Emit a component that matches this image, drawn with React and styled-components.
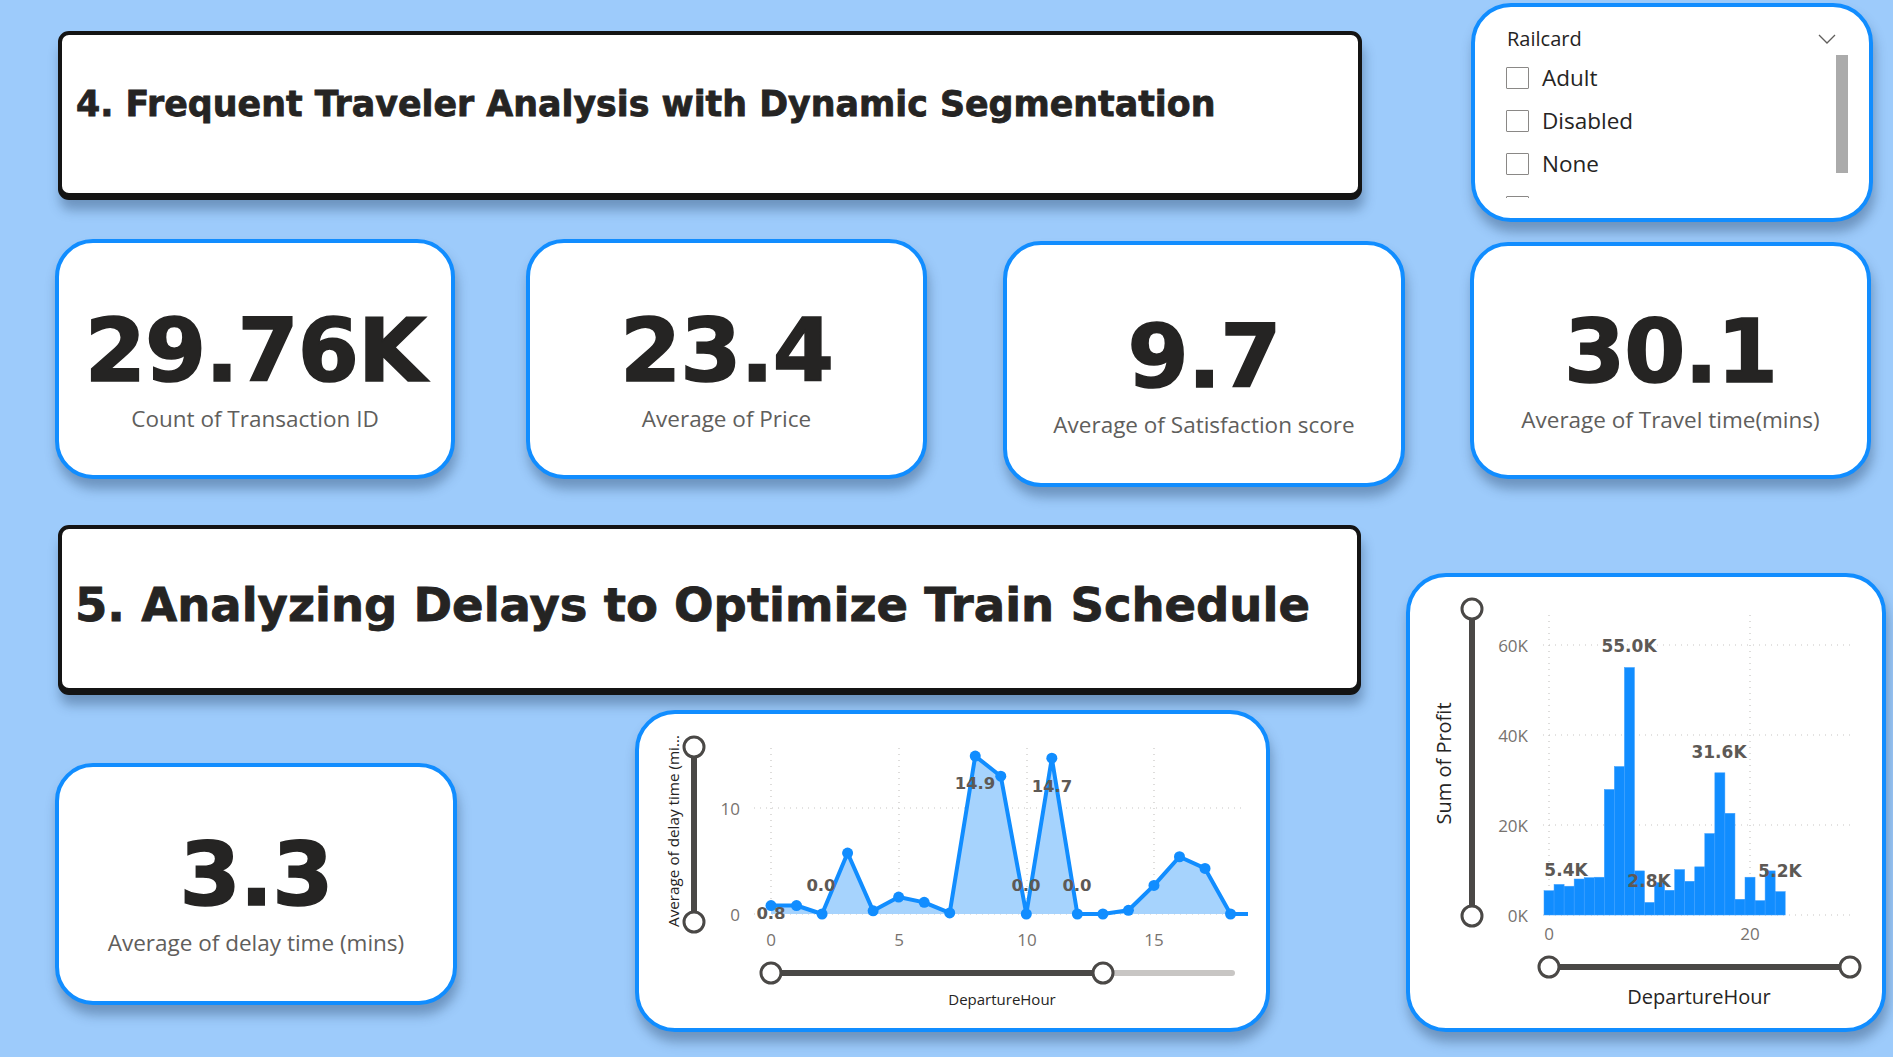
import React from 'react'
import styled, { createGlobalStyle } from 'styled-components'

const GlobalStyle = createGlobalStyle`
  * { box-sizing: border-box; }
  html, body { margin: 0; padding: 0; background: #9dcbfb; }
  body {
    font-family: "Open Sans", "Liberation Sans", sans-serif;
    width: 1893px;
    height: 1057px;
    overflow: hidden;
  }
`

const Page = styled.div`
  padding: 3px 0 0 55px;
  display: flex;
  flex-direction: column;
`

const Row = styled.div`
  display: flex;
  align-items: flex-start;
  margin-top: ${p => p.$mt || 0}px;
`

const Column = styled.div`
  display: flex;
  flex-direction: column;
`

const TitleBox = styled.div`
  width: ${p => p.$w}px;
  height: ${p => p.$h}px;
  margin-left: ${p => p.$ml || 0}px;
  margin-top: ${p => p.$mt || 0}px;
  padding: ${p => p.$pt}px 0 0 ${p => p.$pl}px;
  background: #fff;
  border: 4px solid #141414;
  border-radius: 11px;
  box-shadow: 0 3px 0 #141414, 2px 13px 12px rgba(20, 45, 80, 0.35);
  font-family: "DejaVu Sans", "Liberation Sans", sans-serif;
  font-weight: 700;
  font-size: ${p => p.$fs}px;
  line-height: 1.2;
  color: #252423;
  -webkit-text-stroke: 0.8px #252423;
  white-space: nowrap;
`

const Panel = styled.div`
  width: ${p => p.$w}px;
  height: ${p => p.$h}px;
  margin-left: ${p => p.$ml || 0}px;
  margin-top: ${p => p.$mt || 0}px;
  background: #fff;
  border: 4px solid #118dff;
  border-radius: ${p => p.$r || 38}px;
  box-shadow: 2px 10px 12px rgba(20, 45, 80, 0.35);
  overflow: hidden;
`

const KpiCard = styled(Panel)`
  display: flex;
  flex-direction: column;
  align-items: center;
  padding-top: ${p => p.$pt}px;
`

const KpiValue = styled.div`
  font-family: "DejaVu Sans", "Liberation Sans", sans-serif;
  font-weight: 700;
  font-size: 88px;
  line-height: 88px;
  letter-spacing: -1px;
  color: #252423;
  -webkit-text-stroke: 1.6px #252423;
`

const KpiLabel = styled.div`
  margin-top: 10px;
  font-size: 22.5px;
  line-height: 28px;
  color: #605e5c;
  white-space: nowrap;
`

const SlicerHead = styled.div`
  display: flex;
  justify-content: space-between;
  align-items: flex-start;
  padding: 20px 33px 0 32px;
  font-size: 20px;
  line-height: 24px;
  color: #252423;
`

const Chevron = styled.svg`
  margin-top: 7px;
`

const SlicerBody = styled.div`
  display: flex;
  align-items: flex-start;
  margin-top: 5px;
  padding: 0 21px 0 31px;
`

const ItemList = styled.div`
  flex: 1;
  height: 142px;
  overflow: hidden;
`

const Item = styled.div`
  height: 43px;
  display: flex;
  align-items: center;
  gap: 13px;
  font-size: 22.5px;
  line-height: 28px;
  color: #252423;
`

const Box = styled.span`
  width: 23px;
  height: 22px;
  border: 1.5px solid #8a8886;
  border-radius: 1px;
`

const ScrollThumb = styled.div`
  width: 12px;
  height: 118px;
  margin-top: -1px;
  background: #ababab;
`

const ChartSvg = styled.svg`
  display: block;
  font-family: "Open Sans", "Liberation Sans", sans-serif;
`

const delay = [0.8, 0.8, 0, 5.75, 0.3, 1.6, 1.1, 0.1, 14.9, 13.0, 0, 14.7, 0, 0, 0.35, 2.7, 5.4, 4.3, 0]
const lx = h => 136 + h * 25.53
const ly = v => 204 - v * 10.6

const profit = [5.4, 6.8, 6.4, 8.0, 8.3, 8.4, 27.9, 33.0, 55.0, 9.8, 2.8, 7.2, 5.5, 10.1, 7.5, 10.7, 18.1, 31.6, 22.6, 3.5, 8.4, 3.2, 9.8, 5.2]
const bx = h => 143 + h * 10.05
const by = v => 342 - v * 4.5

const grid = { stroke: '#c8c6c4', strokeWidth: 1.2, strokeDasharray: '1 5' }
const axisText = { fontSize: 17, fill: '#77736f', dominantBaseline: 'central' }
const dataText = { fontFamily: '"DejaVu Sans", sans-serif', fontWeight: 700, fill: '#5d5955', textAnchor: 'middle', dominantBaseline: 'central' }
const handle = { r: 10, fill: '#fff', stroke: '#4a4846', strokeWidth: 3 }

function LineChart() {
  const pts = delay.map((v, h) => `${lx(h)},${ly(v)}`)
  const line = 'M' + pts.join(' L') + ` L613,204`
  const area = line + ` L136,204 Z`
  return (
    <ChartSvg width="627" height="314" viewBox="4 4 627 314">
      {[136, 264, 392, 519].map(x => <line key={x} x1={x} y1="38" x2={x} y2="204" {...grid} />)}
      {[98, 204].map(y => <line key={y} x1="119" y1={y} x2="609" y2={y} {...grid} />)}
      <path d={area} fill="#a6d3fd" />
      <path d={line} fill="none" stroke="#118dff" strokeWidth="4" strokeLinejoin="round" />
      {delay.map((v, h) => <circle key={h} cx={lx(h)} cy={ly(v)} r="5.5" fill="#118dff" />)}
      <text x="105" y="98" textAnchor="end" {...axisText}>10</text>
      <text x="105" y="204" textAnchor="end" {...axisText}>0</text>
      {[[136, '0'], [264, '5'], [392, '10'], [519, '15']].map(([x, t]) => (
        <text key={t} x={x} y="229" textAnchor="middle" {...axisText}>{t}</text>
      ))}
      {[[136, 203, '0.8'], [186, 175, '0.0'], [340, 73, '14.9'], [417, 76, '14.7'], [391, 175, '0.0'], [442, 175, '0.0']].map(([x, y, t], i) => (
        <text key={i} x={x} y={y} fontSize="16.5" {...dataText}>{t}</text>
      ))}
      <text transform="translate(38 121) rotate(-90)" textAnchor="middle" dominantBaseline="central" fontSize="14" fill="#252423" textLength="192" lengthAdjust="spacingAndGlyphs">Average of delay time (mi...</text>
      <line x1="59" y1="37" x2="59" y2="212" stroke="#4a4846" strokeWidth="6" />
      <circle cx="59" cy="37" {...handle} />
      <circle cx="59" cy="212" {...handle} />
      <line x1="468" y1="263" x2="597" y2="263" stroke="#c8c6c4" strokeWidth="6" strokeLinecap="round" />
      <line x1="136" y1="263" x2="468" y2="263" stroke="#4a4846" strokeWidth="6" />
      <circle cx="136" cy="263" {...handle} />
      <circle cx="468" cy="263" {...handle} />
      <text x="367" y="289" textAnchor="middle" dominantBaseline="central" fontSize="15" fill="#252423">DepartureHour</text>
    </ChartSvg>
  )
}

function BarChart() {
  return (
    <ChartSvg width="472" height="451" viewBox="4 4 472 451">
      {[143, 344].map(x => <line key={x} x1={x} y1="42" x2={x} y2="342" {...grid} />)}
      {[72, 162, 252, 342].map(y => <line key={y} x1="137" y1={y} x2="446" y2={y} {...grid} />)}
      {profit.map((v, h) => (
        <rect key={h} x={bx(h) - 5} y={by(v)} width="10.05" height={v * 4.5} fill="#118dff" stroke="#3d9fff" strokeWidth="0.5" />
      ))}
      {[[72, '60K'], [162, '40K'], [252, '20K'], [342, '0K']].map(([y, t]) => (
        <text key={t} x="122" y={y} textAnchor="end" {...axisText}>{t}</text>
      ))}
      <text x="143" y="360" textAnchor="middle" {...axisText}>0</text>
      <text x="344" y="360" textAnchor="middle" {...axisText}>20</text>
      {[[223, 73, '55.0K'], [313, 179, '31.6K'], [160, 297, '5.4K'], [243, 308, '2.8K'], [374, 298, '5.2K']].map(([x, y, t]) => (
        <text key={t} x={x} y={y} fontSize="17" {...dataText}>{t}</text>
      ))}
      <text transform="translate(37 190.5) rotate(-90)" textAnchor="middle" dominantBaseline="central" fontSize="20" fill="#252423">Sum of Profit</text>
      <line x1="66" y1="36" x2="66" y2="343" stroke="#4a4846" strokeWidth="6" />
      <circle cx="66" cy="36" {...handle} />
      <circle cx="66" cy="343" {...handle} />
      <line x1="143" y1="394" x2="444" y2="394" stroke="#4a4846" strokeWidth="6" />
      <circle cx="143" cy="394" {...handle} />
      <circle cx="444" cy="394" {...handle} />
      <text x="293" y="423" textAnchor="middle" dominantBaseline="central" fontSize="20" fill="#252423">DepartureHour</text>
    </ChartSvg>
  )
}

function Slicer() {
  // the fourth option is scrolled below the fold; only its box edge shows
  const items = ['Adult', 'Disabled', 'None', '']
  return (
    <Panel $w={402} $h={219} $ml={109} $r={40}>
      <SlicerHead>
        <span>Railcard</span>
        <Chevron width="18" height="10" viewBox="0 0 18 10">
          <polyline points="1,1 9,9 17,1" fill="none" stroke="#605e5c" strokeWidth="1.3" />
        </Chevron>
      </SlicerHead>
      <SlicerBody>
        <ItemList>
          {items.map((t, i) => (
            <Item key={i}><Box />{t}</Item>
          ))}
        </ItemList>
        <ScrollThumb />
      </SlicerBody>
    </Panel>
  )
}

function Kpi({ value, label, ...rest }) {
  return (
    <KpiCard {...rest}>
      <KpiValue>{value}</KpiValue>
      <KpiLabel>{label}</KpiLabel>
    </KpiCard>
  )
}

export default function App() {
  return (
    <Page>
      <GlobalStyle />
      <Row>
        <TitleBox $w={1304} $h={166} $ml={3} $mt={28} $pt={48.5} $pl={14} $fs={34.8}>
          4. Frequent Traveler Analysis with Dynamic Segmentation
        </TitleBox>
        <Slicer />
      </Row>
      <Row $mt={17}>
        <Kpi $w={400} $h={240} $pt={64} value="29.76K" label="Count of Transaction ID" />
        <Kpi $w={401} $h={240} $ml={71} $pt={64} value="23.4" label="Average of Price" />
        <Kpi $w={402} $h={246} $ml={76} $mt={2} $pt={68} value="9.7" label="Average of Satisfaction score" />
        <Kpi $w={401} $h={237} $ml={65} $mt={3} $pt={62} value="30.1" label="Average of Travel time(mins)" />
      </Row>
      <Row>
        <Column>
          <TitleBox $w={1303} $h={167} $ml={3} $mt={38} $pt={49} $pl={13} $fs={46.5}>
            5. Analyzing Delays to Optimize Train Schedule
          </TitleBox>
          <Row>
            <Kpi $w={402} $h={242} $mt={71} $pt={64} value="3.3" label="Average of delay time (mins)" />
            <Panel $w={635} $h={322} $ml={178} $mt={18} $r={40}>
              <LineChart />
            </Panel>
          </Row>
        </Column>
        <Panel $w={480} $h={459} $ml={45} $mt={86} $r={40}>
          <BarChart />
        </Panel>
      </Row>
    </Page>
  )
}
